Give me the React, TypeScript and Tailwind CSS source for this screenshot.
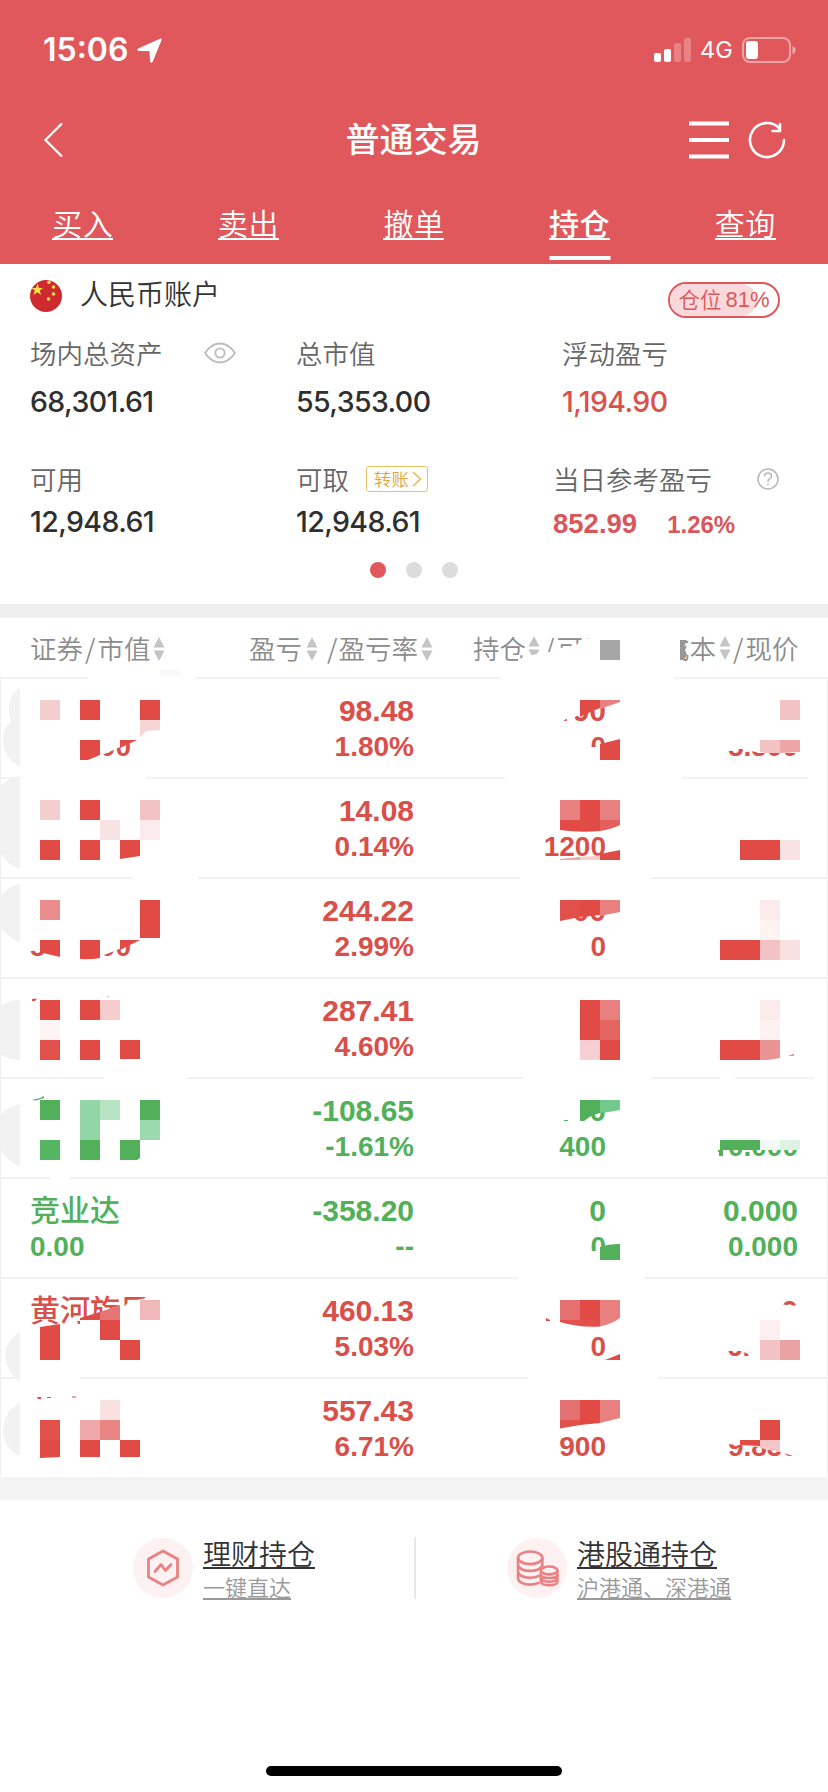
import type { ReactNode } from "react"
import clsx from "clsx"

const RED = "#e14a45"
const GREEN = "#52b05a"

const tabs = ["买入", "卖出", "撤单", "持仓", "查询"]

// x, y, fill, width, height
type Cell = [number, number, string, number?, number?]
// path, fill
type Shape = [string, string]
// x (right edge unless start), baseline, content, size
type Piece = { x: number; y: number; t: string; size: number; start?: boolean }

type Holding = {
  color: "red" | "green"
  name?: string
  value?: string
  profit: string
  rate: string
  amount?: string
  usable?: string
  cost?: string
  price?: string
  pieces?: Piece[]
  mask?: string
  cells?: Cell[]
  shapes?: Shape[]
  gaps?: [number, number][]
}

const holdings: Holding[] = [
  {
    color: "red",
    profit: "98.48",
    rate: "1.80%",
    pieces: [
      { x: 131, y: 78, t: "00", size: 28 },
      { x: 606, y: 43, t: "90", size: 30 },
      { x: 606, y: 78, t: "0", size: 28 },
      { x: 798, y: 78, t: "5.500", size: 28 },
    ],
    mask: "M90 50H145V60L137 62L118 70L100 78V84H90Z M550 15H625V24L580 36L575 39V46H550Z M585 69H601V84H585Z M725 50H800V75H760L742 71H725Z",
    cells: [
      [40, 22, "#f6cdcf"],
      [80, 22, RED],
      [140, 22, RED],
      [780, 22, "#f3c2c4"],
    ],
    shapes: [
      ["M20 10C11 14 8 28 9 36Q12 43 10 45C4 50 3 56 3 62C3 74 10 84 20 89Z", "#f2f2f2"],
      ["M140 42h20v10L146 53L140 59Z", "#f6d5d6"],
      ["M80 62h20v15L88 82H80Z", RED],
      ["M120 62H137L120 70Z", RED],
      ["M580 22H600V30L588 35L580 39Z", RED],
      ["M600 22H620V24L600 31Z", "#e88080"],
      ["M600 66L620 61V82H600Z", RED],
      ["M563 42.500L567 41V43Z", RED],
      ["M760 62h20v13H766L760 74Z", "#f3c2c4"],
      ["M780 62h20v12L780 75Z", "#eea5a6"],
    ],
    gaps: [[88, 196], [500, 674]],
  },
  {
    color: "red",
    profit: "14.08",
    rate: "0.14%",
    usable: "1200",
    cells: [
      [40, 22, "#f6cdcf"],
      [80, 22, RED],
      [140, 22, "#f3c2c4"],
      [100, 42, "#f9e2e3"],
      [140, 42, "#fbebec"],
      [40, 62, RED],
      [80, 62, RED],
      [560, 22, "#e88080"],
      [580, 22, RED],
      [600, 22, "#e88080"],
      [740, 62, RED, 40],
      [780, 62, "#f9e2e3"],
    ],
    shapes: [
      ["M20 -2C8 0 0 6 0 12V72C2 80 10 88 20 91Z", "#f2f2f2"],
      ["M120 62h20v16L120 81Z", RED],
      ["M560 42H600V53Q580 55 560 52Z", RED],
      ["M600 42H620V47Q612 51 600 53Z", "#e4605f"],
      ["M560 81L580 79V82H560Z", "#eea5a6"],
      ["M580 79L600 77.500V82H580Z", "#f6cdcf"],
      ["M600 76L620 72V82H600Z", RED],
    ],
    gaps: [[20, 146], [505, 682], [808, 828]],
  },
  {
    color: "red",
    profit: "244.22",
    rate: "2.99%",
    usable: "0",
    pieces: [
      { x: 30, y: 78, t: "5", size: 28, start: true },
      { x: 131, y: 78, t: "00", size: 28 },
      { x: 606, y: 43, t: "900", size: 30 },
    ],
    mask: "M20 50H45V71H20Z M95 50H145V60L117 72L104 77V82H95Z M540 15H625V32L600 36L574 39V46H540Z",
    cells: [
      [40, 22, "#ea8c8b"],
      [140, 22, RED, 20, 38],
      [760, 22, "#fbebec"],
      [760, 42, "#fdf3f3"],
      [720, 62, RED, 40],
      [760, 62, "#f3c2c4"],
      [780, 62, "#f9e0e1"],
    ],
    shapes: [
      ["M20 6C8 8 0 16 0 24V48C6 58 14 62 20 64Z", "#f2f2f2"],
      ["M40 62h20v17L43 75H40Z", RED],
      ["M80 62h20v18Q90 82 80 81Z", RED],
      ["M120 62H140L120 72Z", RED],
      ["M560 22H580V39L560 43Z", "#e2504b"],
      ["M580 22H600V37L580 39Z", RED],
      ["M600 22H620V34L600 38Z", "#e88080"],
    ],
    gaps: [[132, 198], [520, 651]],
  },
  {
    color: "red",
    profit: "287.41",
    rate: "4.60%",
    cells: [
      [40, 22, RED],
      [80, 22, RED],
      [100, 22, "#f6cdcf"],
      [40, 42, "#fdf5f5"],
      [40, 62, "#e2504b"],
      [80, 62, RED],
      [120, 62, RED, 20, 19],
      [580, 22, RED, 20, 40],
      [600, 22, "#e88080"],
      [600, 42, "#e4645f"],
      [580, 62, "#f5cfd1"],
      [600, 62, RED],
      [760, 22, "#fbebec"],
      [760, 42, "#fdf1f1"],
      [720, 62, RED, 40],
    ],
    shapes: [
      ["M20 22C8 22 2 26 0 29V76C4 79 12 82 20 82Z", "#f2f2f2"],
      ["M32 21L37 20.500L35 23H32Z", RED],
      ["M106 18L109 18L108 20Z", "#d9c9c9"],
      ["M760 62h20v18L768 82H760Z", "#ea9394"],
      ["M788 78L794 76V77.500Z", "#c9605c"],
    ],
    gaps: [],
  },
  {
    color: "green",
    profit: "-108.65",
    rate: "-1.61%",
    usable: "400",
    pieces: [
      { x: 606, y: 43, t: "00", size: 30 },
      { x: 798, y: 78, t: "0.000", size: 28 },
    ],
    mask: "M560 15H625V29L600 33L591 36L584 43V46H560Z M705 50H802V72H705Z",
    cells: [
      [40, 22, GREEN],
      [80, 22, "#92d6a5", 20, 40],
      [100, 22, "#b8e4c4"],
      [140, 22, GREEN],
      [140, 42, "#9bdaad"],
      [40, 62, "#56b563"],
      [80, 62, GREEN],
      [720, 62, GREEN, 40, 10],
      [760, 62, "#f1faf4", 20, 10],
      [780, 62, "#dff2e5", 20, 10],
    ],
    shapes: [
      ["M20 26C10 28 0 34 0 42V70C4 80 12 86 20 88Z", "#f2f2f2"],
      ["M32 22L40 20L44 18V20L36 22.500Z", GREEN],
      ["M120 62h20v18L137 82H120Z", GREEN],
      ["M580 22h20v13L591 38L584 43H580Z", GREEN],
      ["M600 22h20v10Q610 34 600 35Z", "#73c98b"],
      ["M564 42L568 42V43H564Z", GREEN],
      ["M718 72H723V78H719V74H718Z", GREEN],
    ],
    gaps: [[104, 187], [523, 652], [720, 735], [814, 828]],
  },
  {
    color: "green",
    name: "竞业达",
    value: "0.00",
    profit: "-358.20",
    rate: "--",
    amount: "0",
    cost: "0.000",
    price: "0.000",
    pieces: [{ x: 606, y: 78, t: "0", size: 28 }],
    mask: "M585 73H606V84H585Z",
    shapes: [["M600 69Q608 66 620 66V82H600Z", GREEN]],
    gaps: [[50, 70]],
  },
  {
    color: "red",
    name: "黄河旋风",
    profit: "460.13",
    rate: "5.03%",
    usable: "0",
    pieces: [
      { x: 798, y: 43, t: "0", size: 30 },
      { x: 727, y: 78, t: "6.", size: 28, start: true },
    ],
    mask: "M80 46V43L84 41L120 27L125 28L128 24L146 20H155V50H80Z M775 26L800 28V48H775Z M725 50H752V78L742 73H725Z",
    cells: [
      [100, 42, RED],
      [120, 62, RED],
      [140, 22, "#f1b8b9"],
      [560, 22, "#e57070"],
      [580, 22, RED],
      [760, 42, "#fdefef"],
      [760, 62, "#f3c2c4"],
      [780, 62, "#eaa2a2"],
    ],
    shapes: [
      ["M20 54C9 60 5 70 5 77C5 88 12 98 20 105Z", "#f2f2f2"],
      ["M40 49L60 46V82H40Z", RED],
      ["M80 40L100 34V42H80Z", RED],
      ["M100 34L120 27V42H100Z", "#e57574"],
      ["M560 42H600V48.500Q580 50 560 44Z", "#e2504b"],
      ["M600 22H620V40Q612 46 600 48.500Z", "#e88080"],
      ["M546 40L550 42V43H546Z", RED],
      ["M605 82L620 76V82Z", RED],
    ],
    gaps: [[518, 645]],
  },
  {
    color: "red",
    profit: "557.43",
    rate: "6.71%",
    usable: "900",
    pieces: [{ x: 798, y: 78, t: "9.830", size: 28 }],
    mask: "M725 50H800V80L780 74L760 69L740 67L725 66Z",
    cells: [
      [100, 22, "#f9e0e1"],
      [40, 42, "#e2504b"],
      [80, 42, "#eea8a9"],
      [100, 42, "#e88482"],
      [80, 62, RED, 20, 17],
      [120, 62, RED, 20, 17],
      [560, 22, "#e57070"],
      [760, 42, RED],
    ],
    shapes: [
      ["M20 24C8 32 3 42 3 52C3 64 10 74 20 78Z", "#f2f2f2"],
      ["M40 62h20v17L40 80Z", RED],
      ["M37 19h4v2h-3Z M47 19h4v1h-4Z M72 18.500h4v1h-4Z", RED],
      ["M580 22H600V45L580 47Z", RED],
      ["M560 42h20v5L560 50.500Z", "#e2504b"],
      ["M600 22H620V40L600 45Z", "#e88080"],
      ["M740 62H760V68L740 67Z", RED],
      ["M760 62h20v12L760 70Z", "#f5c5c8"],
    ],
    gaps: [[20, 80], [528, 658]],
  },
]

function StatusBar() {
  return (
    <div className="flex h-[100px] items-center justify-between pl-[43px] pr-[34px] text-white">
      <div className="flex items-center gap-[9px]">
        <span className="font-[Inter] text-[32px] font-semibold leading-none">15:06</span>
        <svg width="25" height="25" viewBox="0 0 25 25" fill="currentColor">
          <path d="M23 0.700Q25 0 24.500 2.200L15.800 23.500Q14.200 26 13.200 23.500L12.500 14Q12.400 13 11.400 13H2Q-1 12.300 1.200 10.600Z" />
        </svg>
      </div>
      <div className="flex items-center">
        <svg width="38" height="24" viewBox="0 0 38 24" fill="#fff">
          <rect x="0" y="15" width="7" height="9" rx="2" />
          <rect x="10" y="11" width="7" height="13" rx="2" />
          <rect x="20" y="5" width="7" height="19" rx="2" opacity="0.25" />
          <rect x="30" y="0" width="7" height="24" rx="2" opacity="0.25" />
        </svg>
        <span className="ml-[8px] w-[33px] font-[Inter] text-[23.500px] leading-none">4G</span>
        <svg className="ml-[9px] -mr-[2px]" width="54" height="26" viewBox="0 0 54 26">
          <rect x="1" y="1" width="47" height="24" rx="7" fill="none" stroke="#fff" strokeOpacity="0.45" strokeWidth="2" />
          <rect x="4" y="4" width="12" height="18" rx="3" fill="#fff" />
          <path d="M50.500 9Q53.500 10 53.500 13T50.500 17Z" fill="#fff" opacity="0.5" />
        </svg>
      </div>
    </div>
  )
}

function Header() {
  return (
    <header className="h-[264px] bg-[#e0585c] text-white">
      <StatusBar />
      <div className="flex h-[80px] items-center justify-between pl-[43px] pr-[42px]">
        <svg width="97" height="36" viewBox="0 0 97 36" fill="none" stroke="#fff" strokeWidth="2.200">
          <path d="M19 1.500L2.500 18L19 34.500" />
        </svg>
        <h1 className="-mt-[4px] -ml-[2px] text-[34px] font-medium leading-none">普通交易</h1>
        <div className="flex items-center gap-[19px]">
          <svg width="40" height="40" viewBox="0 0 40 40" stroke="#fff" strokeWidth="4">
            <path d="M0 3.500H40M0 20H40M0 36.500H40" />
          </svg>
          <svg width="38" height="38" viewBox="0 0 38 38" fill="none" stroke="#fff" strokeWidth="2.600" strokeLinecap="round" strokeLinejoin="round">
            <path d="M36 19A17 17 0 1 1 31.500 7.500M32 3V10H24.500" />
          </svg>
        </div>
      </div>
      <nav className="flex h-[84px]">
        {tabs.map((tab) => (
          <a key={tab} className="relative flex-1 pt-[21px] text-center">
            <span
              className={clsx(
                "inline-block h-[39px] border-b-2 border-white text-[30px] leading-[43px] tracking-[0.500px]",
                tab === "持仓" ? "font-medium" : "font-[350]",
              )}
            >
              {tab}
            </span>
            {tab === "持仓" && <i className="absolute bottom-1 left-1/2 h-1 w-[61px] -translate-x-1/2 bg-white" />}
          </a>
        ))}
      </nav>
    </header>
  )
}

function Flag() {
  return (
    <svg width="32" height="32" viewBox="0 0 32 32">
      <circle cx="16" cy="16" r="16" fill="#ce2a30" />
      <g fill="#fbe04a">
        <path d="M7.500 3.500L9 8H13L9.800 10.500L11 15L7.500 12.300L3.500 15L4.800 10.500L1.500 8H6Z" />
        <circle cx="19" cy="2.200" r="1.800" />
        <circle cx="23.500" cy="7" r="1.800" />
        <circle cx="23.500" cy="14" r="1.800" />
        <circle cx="18.500" cy="19" r="1.800" />
      </g>
    </svg>
  )
}

function Label({ children }: { children: ReactNode }) {
  return <div className="flex h-8 items-center pb-[2px] text-[26.500px] font-[350] leading-8 text-[#666]">{children}</div>
}

function Value({ children, className }: { children: ReactNode; className: string }) {
  return <div className={clsx("font-[Inter] text-[28.500px] font-medium leading-8 tracking-[-0.6px]", className)}>{children}</div>
}

function Summary() {
  return (
    <section className="h-[340px] pl-[30px]">
      <div className="flex h-[64px] items-center justify-between pr-12">
        <div className="flex items-center">
          <Flag />
          <span className="-mt-[7px] ml-[18px] text-[28px] font-[350] leading-8 text-[#333]">人民币账户</span>
        </div>
        <div className="relative mt-[8px] flex h-9 w-[112px] items-center justify-center overflow-hidden rounded-full border-2 border-[#e0585c] text-[#d9575b]">
          <i className="absolute inset-y-0 left-0 w-[81%] rounded-r-full bg-[#f9d9db]" />
          <span className="relative -mt-[3px] text-[21.500px] font-[350] leading-none">仓位</span>
          <span className="relative ml-[4px] font-['Liberation_Sans'] text-[22px] leading-none">81%</span>
        </div>
      </div>
      <div className="grid grid-cols-[266px_266px_266px] pt-[10px]">
        <div>
          <Label>
            场内总资产
            <svg className="ml-[41px]" width="32" height="22" viewBox="0 0 32 22" fill="none" stroke="#bbb" strokeWidth="1.800">
              <path d="M1 11Q7.500 1.500 16 1.500T31 11Q24.500 20.500 16 20.500T1 11Z" />
              <circle cx="16" cy="11" r="4.600" />
            </svg>
          </Label>
          <Value className="mt-4 text-[#2f2f2f]">68,301.61</Value>
        </div>
        <div>
          <Label>总市值</Label>
          <Value className="mt-4 text-[#2f2f2f]">55,353.00</Value>
        </div>
        <div>
          <Label>浮动盈亏</Label>
          <Value className="mt-4 text-[#d9524a]">1,194.90</Value>
        </div>
      </div>
      <div className="grid grid-cols-[266px_257px_274px] pt-[46px]">
        <div>
          <Label>可用</Label>
          <Value className="mt-[10px] text-[#2f2f2f]">12,948.61</Value>
        </div>
        <div>
          <Label>
            可取
            <span className="ml-[17px] flex h-[26px] w-[62px] items-center rounded-[3px] border-[1.500px] border-[#ecc164] pl-[7px] text-[17.500px] leading-none text-[#e2a63a]">
              转账
              <svg className="ml-[3px]" width="10" height="16" viewBox="0 0 10 16" fill="none" stroke="#ecb94f" strokeWidth="1.600">
                <path d="M1 1L8.500 8L1 15" />
              </svg>
            </span>
          </Label>
          <Value className="mt-[10px] text-[#2f2f2f]">12,948.61</Value>
        </div>
        <div>
          <Label>
            当日参考盈亏
            <svg className="ml-[45px]" width="22" height="22" viewBox="0 0 22 22" fill="none" stroke="#b5b5b5" strokeWidth="1.500">
              <circle cx="11" cy="11" r="10" />
              <path d="M7.500 8.500Q7.500 5 11 5T14.500 8Q14.500 9.600 12.600 10.800T11 13.500V14M11 15.500V17.300" />
            </svg>
          </Label>
          <div className="mt-[12px] flex items-baseline gap-[30px] font-['Liberation_Sans'] font-bold leading-8 text-[#d9575b]">
            <span className="text-[27.500px]">852.99</span>
            <span className="text-[24px]">1.26%</span>
          </div>
        </div>
      </div>
      <div className="mt-[21px] flex gap-5 pl-[340px]">
        <i className="size-4 rounded-full bg-[#e0585c]" />
        <i className="size-4 rounded-full bg-[#dcdcdc]" />
        <i className="size-4 rounded-full bg-[#dcdcdc]" />
      </div>
    </section>
  )
}

function Sort({ className }: { className?: string }) {
  return (
    <svg className={className} width="12" height="24" viewBox="0 0 12 24" fill="#c4c4c4">
      <path d="M6 0L11.500 10.500H.5Z" />
      <path d="M6 24L11.500 13.500H.5Z" />
    </svg>
  )
}

function Slash({ className }: { className?: string }) {
  return <span className={className}>/</span>
}

function TableHead() {
  return (
    <div className="relative flex h-[59px] items-center pl-[30px] text-[26.500px] font-[350] leading-[30px] text-[#8c8c8c]">
      <div className="flex h-8 w-[219px] items-center">
        证券<Slash className="mx-[2px]" />市值<Sort className="ml-[3px] mt-[2px]" />
      </div>
      <div className="flex h-8 w-[224px] items-center">
        盈亏<Sort className="ml-[4px] mt-[2px]" /><Slash className="ml-[9px] mr-[1px]" />盈亏率<Sort className="ml-[3px] mt-[2px]" />
      </div>
      <div className="flex h-8 w-[190px] items-center">
        持仓<Sort className="ml-[2px]" /><Slash className="ml-[4px] mr-[2px]" />可用
      </div>
      <div className="flex h-8 items-center">
        成本<Sort className="ml-[3px]" /><Slash className="mx-[2px]" />现价
      </div>
      <svg className="absolute left-0 top-0" width="828" height="59" viewBox="0 618 828 59">
        <path d="M518 659L540 653L550 652L556 649L576 645L583 640L596 636L600 633L625 630V670H518Z M655 630H680V670H655Z M680 630H682L687 636V641H680Z" fill="#fff" />
        <rect x="600" y="640" width="20" height="20" fill="#a6a6a6" />
        <path d="M680 640H687L684 647L687 655L684 660H680Z" fill="#979797" />
        <rect x="160" y="669" width="20" height="8" fill="#fafafa" />
      </svg>
    </div>
  )
}

function Row({ item }: { item: Holding }) {
  const fill = item.color === "red" ? "#d94f49" : GREEN
  return (
    <div className={clsx("relative h-[100px] border-t-2 border-[#f2f2f2] font-['Liberation_Sans','Noto_Sans_CJK_SC',sans-serif] font-bold", item.color === "red" ? "text-[#d94f49]" : "text-[#52b05a]")}>
      <div className="grid grid-cols-4 px-[30px] pt-[14px] text-right leading-9">
        <div className="text-left">
          <div className="h-9 text-[30px] font-medium">{item.name}</div>
          <div className="h-9 text-[28px]">{item.value}</div>
        </div>
        <div>
          <div className="h-9 text-[30px]">{item.profit}</div>
          <div className="h-9 text-[28px]">{item.rate}</div>
        </div>
        <div>
          <div className="h-9 text-[30px]">{item.amount}</div>
          <div className="h-9 text-[28px]">{item.usable}</div>
        </div>
        <div>
          <div className="h-9 text-[30px]">{item.cost}</div>
          <div className="h-9 text-[28px]">{item.price}</div>
        </div>
      </div>
      <svg className="absolute -top-0.5 left-0 overflow-visible" width="828" height="100" viewBox="0 -1 828 100">
        {item.pieces?.map((p) => (
          <text key={p.t + p.x + p.y} x={p.x} y={p.y} fontSize={p.size} textAnchor={p.start ? "start" : "end"} fill={fill}>
            {p.t}
          </text>
        ))}
        {item.mask && <path d={item.mask} fill="#fff" />}
        {item.gaps?.map(([from, to]) => (
          <rect key={from} x={from} y={-1} width={to - from} height={2} fill="#fff" />
        ))}
        {item.cells?.map(([x, y, color, w = 20, h = 20]) => (
          <rect key={`${x}-${y}`} x={x} y={y} width={w} height={h} fill={color} shapeRendering="crispEdges" />
        ))}
        {item.shapes?.map(([d, color]) => (
          <path key={d} d={d} fill={color} />
        ))}
      </svg>
    </div>
  )
}

function Entry({ icon, title, desc }: { icon: ReactNode; title: string; desc: string }) {
  return (
    <a className="flex items-center">
      <span className="flex size-[60px] items-center justify-center rounded-full bg-[#fdf1f2]">{icon}</span>
      <span className="ml-[10px] flex flex-col items-start">
        <span className="h-[32px] border-b-2 border-[#333] text-[28px] font-[350] leading-[33px] text-[#333]">{title}</span>
        <span className="mt-[5px] h-[26px] border-b-2 border-[#999] text-[22px] font-[350] leading-[25px] text-[#999]">{desc}</span>
      </span>
    </a>
  )
}

function Footer() {
  return (
    <footer className="relative h-[292px] pt-[37px]">
      <div className="flex h-[62px] items-center pl-[133px]">
        <div className="w-[281px]">
          <Entry
            title="理财持仓"
            desc="一键直达"
            icon={
              <svg width="34" height="38" viewBox="0 0 34 38" fill="none" stroke="#ea8285" strokeWidth="2.800" strokeLinejoin="round" strokeLinecap="round">
                <path d="M17 2L31.500 10V28L17 36L2.500 28V10Z" />
                <path d="M9 22.500L15 15.500L19.500 21.500L25 15.500" />
              </svg>
            }
          />
        </div>
        <i className="h-[62px] w-[2px] bg-[#e8e8e8]" />
        <div className="pl-[91px]">
          <Entry
            title="港股通持仓"
            desc="沪港通、深港通"
            icon={
              <svg width="43" height="37" viewBox="0 0 44 38" fill="none" stroke="#ea8285" strokeWidth="2.700">
                <ellipse cx="14.500" cy="8" rx="12.500" ry="6.500" />
                <path d="M2 8V29C2 33 8 35.500 14.500 35.500Q20 35.500 24 33.500M27 8V18M2 15C2 19 8 21.500 14.500 21.500S27 19 27 15M2 22C2 26 8 28.500 14.500 28.500Q20 28.500 24.500 26" />
                <ellipse cx="34" cy="21" rx="8.500" ry="4" />
                <path d="M25.500 21V32C25.500 37.500 42.500 37.500 42.500 32V21M25.500 25C25.500 30 42.500 30 42.500 25M25.500 28.500C25.500 34 42.500 34 42.500 28.500" />
              </svg>
            }
          />
        </div>
      </div>
      <i className="absolute bottom-4 left-[266px] h-[10px] w-[296px] rounded-full bg-black" />
    </footer>
  )
}

export default function App() {
  return (
    <div className="h-[1792px] w-[828px] overflow-hidden bg-white font-['Noto_Sans_CJK_SC',sans-serif]">
      <Header />
      <Summary />
      <div className="h-[14px] bg-[#efefef]" />
      <TableHead />
      <div className="relative">
        {holdings.map((item) => (
          <Row key={item.profit} item={item} />
        ))}
        <i className="absolute bottom-0 left-0 top-0 w-px bg-[#f0f0f0]" />
        <i className="absolute bottom-0 right-0 top-0 w-px bg-[#f0f0f0]" />
      </div>
      <div className="h-[23px] bg-[#f3f3f3]" />
      <Footer />
    </div>
  )
}
